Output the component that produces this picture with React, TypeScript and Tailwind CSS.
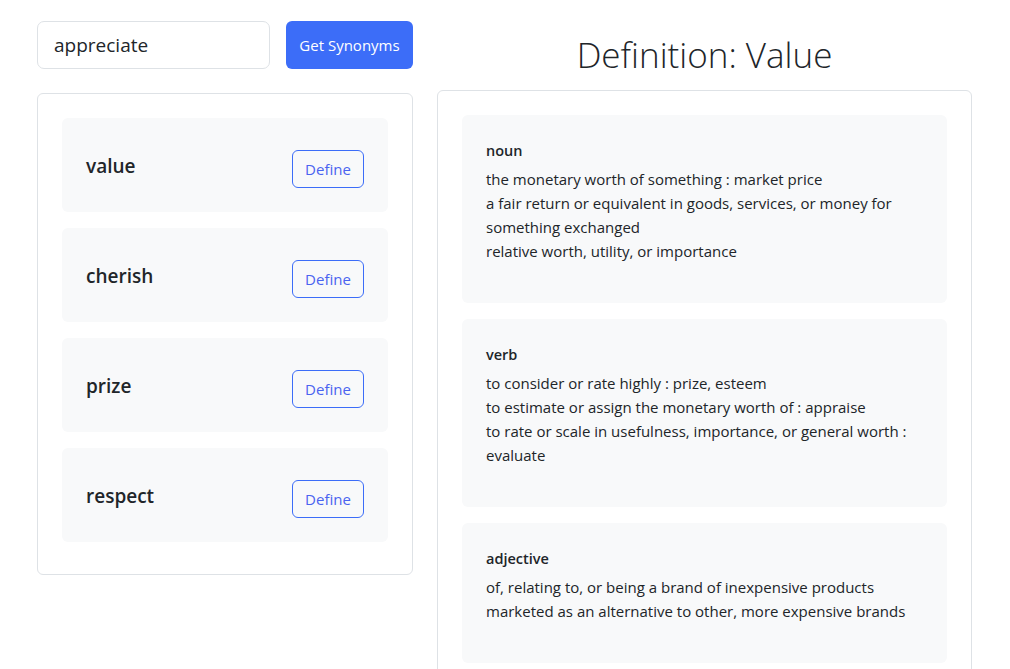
import React from "react";

const words = ["value", "cherish", "prize", "respect"];

const defs = [
  {
    pos: "noun",
    lines: [
      "the monetary worth of something : market price",
      "a fair return or equivalent in goods, services, or money for something exchanged",
      "relative worth, utility, or importance",
    ],
  },
  {
    pos: "verb",
    lines: [
      "to consider or rate highly : prize, esteem",
      "to estimate or assign the monetary worth of : appraise",
      "to rate or scale in usefulness, importance, or general worth : evaluate",
    ],
  },
  {
    pos: "adjective",
    lines: [
      "of, relating to, or being a brand of inexpensive products marketed as an alternative to other, more expensive brands",
    ],
  },
];

export default function App() {
  return (
    <div
      className="min-h-[669px] bg-white text-[#212529] text-[16px] leading-[24px]"
      style={{ fontFamily: '"Open Sans", "Noto Sans", sans-serif' }}
    >
      <div className="flex gap-6 pl-[37px] pt-[21px]">
        <div className="w-[376px] shrink-0 flex flex-col">
          <div className="flex gap-4 h-[48px]">
            <div className="w-[233px] h-[48px] border border-[#dee2e6] rounded-[7px] flex items-center px-4 text-[19px]">
              appreciate
            </div>
            <button className="w-[127px] h-[48px] rounded-[6px] bg-[#3c6df8] text-white text-[15px]">
              Get Synonyms
            </button>
          </div>
          <div className="mt-[24px] border border-[#dee2e6] rounded-[6px] p-6 pb-[32px] flex flex-col gap-4">
            {words.map((w) => (
              <div
                key={w}
                className="bg-[#f8f9fa] rounded-[6px] px-6 pt-8 pb-6 flex items-center justify-between"
              >
                <span className="text-[19px] font-semibold leading-[24px] mb-[6px]">{w}</span>
                <button className="h-[38px] w-[72px] border border-[#3c6df8] rounded-[6px] text-[#4a63f0] text-[15px]">
                  Define
                </button>
              </div>
            ))}
          </div>
        </div>
        <div className="w-[535px] shrink-0 flex flex-col">
          <h1 className="text-center text-[35px] font-light leading-[48px] mt-[10px] h-[59px]">
            Definition: Value
          </h1>
          <div className="border border-[#dee2e6] rounded-[6px] p-6 pb-8 flex flex-col gap-4">
            {defs.map((d) => (
              <div key={d.pos} className="bg-[#f8f9fa] rounded-[6px] p-6">
                <div className="font-semibold text-[14.5px] leading-[24px] mb-1">{d.pos}</div>
                <div className="mb-4 text-[15px] leading-[24px]">
                  {d.lines.map((l) => (
                    <div key={l}>{l}</div>
                  ))}
                </div>
              </div>
            ))}
          </div>
        </div>
      </div>
    </div>
  );
}
